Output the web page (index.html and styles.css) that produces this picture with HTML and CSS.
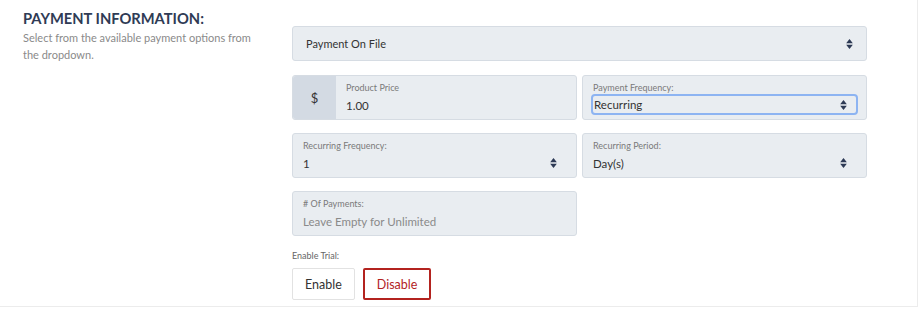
FILE: index.html
```html
<!DOCTYPE html>
<html>
<head>
  <meta charset="UTF-8">
  <title>Payment Information</title>
  <link rel="stylesheet" href="styles.css">
</head>
<body>

<div class="panel">
  <!-- Colonne de gauche : titre + aide -->
  <div class="intro">
    <h2>PAYMENT INFORMATION:</h2>
    <p>Select from the available payment options from the dropdown.</p>
  </div>

  <!-- Colonne de droite : champs -->
  <div class="fields">
    <div class="select-box">
      <span>Payment On File</span>
      <svg class="sort" viewBox="0 0 8 12"><path d="M4 0 L8 5 H0 Z M0 7 H8 L4 12 Z"/></svg>
    </div>

    <div class="grid">
      <div class="field with-addon">
        <div class="addon">$</div>
        <div class="field-body">
          <label>Product Price</label>
          <div class="value">1.00</div>
        </div>
      </div>

      <div class="field">
        <div class="field-body">
          <label>Payment Frequency:</label>
          <div class="value focused">
            <span>Recurring</span>
            <svg class="sort" viewBox="0 0 8 12"><path d="M4 0 L8 5 H0 Z M0 7 H8 L4 12 Z"/></svg>
          </div>
        </div>
      </div>

      <div class="field">
        <div class="field-body">
          <label>Recurring Frequency:</label>
          <div class="value">
            <span>1</span>
            <svg class="sort" viewBox="0 0 8 12"><path d="M4 0 L8 5 H0 Z M0 7 H8 L4 12 Z"/></svg>
          </div>
        </div>
      </div>

      <div class="field">
        <div class="field-body">
          <label>Recurring Period:</label>
          <div class="value">
            <span>Day(s)</span>
            <svg class="sort" viewBox="0 0 8 12"><path d="M4 0 L8 5 H0 Z M0 7 H8 L4 12 Z"/></svg>
          </div>
        </div>
      </div>

      <div class="field">
        <div class="field-body">
          <label># Of Payments:</label>
          <div class="value placeholder">Leave Empty for Unlimited</div>
        </div>
      </div>
    </div>

    <div class="trial">
      <div class="trial-label">Enable Trial:</div>
      <div class="toggle">
        <button class="btn">Enable</button>
        <button class="btn active">Disable</button>
      </div>
    </div>
  </div>
</div>

</body>
</html>
```

FILE: styles.css
```css
/* --- BASE --- */
* {
  margin: 0;
  padding: 0;
  box-sizing: border-box;
}
body {
  background: #fff;
  font-family: 'Lato', 'Liberation Sans', sans-serif;
  color: #333;
}

/* --- PANNEAU --- */
.panel {
  display: grid;
  grid-template-columns: 292px 575px;
  width: 918px;
  height: 307px;
  border-right: 1px solid #ececec;
  border-bottom: 1px solid #ececec;
}

.intro {
  padding: 9px 0 0 23px;
}
.intro h2 {
  font-size: 14.7px;
  font-weight: 700;
  color: #2f3b55;
  line-height: 19px;
}
.intro p {
  width: 240px;
  font-size: 11px;
  line-height: 17px;
  color: #8a8a8a;
  margin-top: 1px;
}

/* --- CHAMPS --- */
.fields {
  padding-top: 26px;
}

.select-box {
  display: flex;
  align-items: center;
  justify-content: space-between;
  height: 35px;
  padding: 0 13px 0 13px;
  background: #e9edf1;
  border: 1px solid #d6dce3;
  border-radius: 3px;
  font-size: 11px;
  color: #333;
}

.sort {
  width: 7px;
  height: 10px;
  fill: #2d3a55;
}

.grid {
  display: grid;
  grid-template-columns: 285px 285px;
  column-gap: 5px;
  row-gap: 13px;
  margin-top: 14px;
}

.field {
  display: flex;
  height: 45px;
  background: #e9edf1;
  border: 1px solid #d6dce3;
  border-radius: 3px;
}

.addon {
  width: 43px;
  flex-shrink: 0;
  display: flex;
  align-items: center;
  justify-content: center;
  background: #d3dae3;
  font-size: 13px;
  color: #333;
  border-radius: 3px 0 0 3px;
}

.field-body {
  flex: 1;
  padding: 6px 10px 0 10px;
}

.field-body label {
  display: block;
  font-size: 9px;
  line-height: 12px;
  color: #7a7a7a;
}

.value {
  display: flex;
  align-items: center;
  justify-content: space-between;
  height: 20px;
  margin-top: 1px;
  padding-right: 9px;
  font-size: 11.5px;
  color: #333;
}

.value.focused {
  margin-left: -2px;
  margin-right: -2px;
  margin-top: 0;
  height: 21px;
  padding-left: 1px;
  padding-right: 9px;
  border: 2px solid #8db4f2;
  border-radius: 4px;
}

.value.placeholder {
  color: #8a8a8a;
}

/* --- ESSAI --- */
.trial {
  margin-top: 14px;
}
.trial-label {
  font-size: 9px;
  line-height: 12px;
  color: #666;
}
.toggle {
  display: flex;
  gap: 8px;
  margin-top: 6px;
}
.btn {
  height: 32px;
  padding: 0 12px;
  background: #fff;
  border: 1px solid #e2e2e2;
  border-radius: 2px;
  font-family: inherit;
  font-size: 12.5px;
  color: #333;
}
.btn.active {
  border: 2px solid #b3231f;
  color: #b3231f;
}
```
